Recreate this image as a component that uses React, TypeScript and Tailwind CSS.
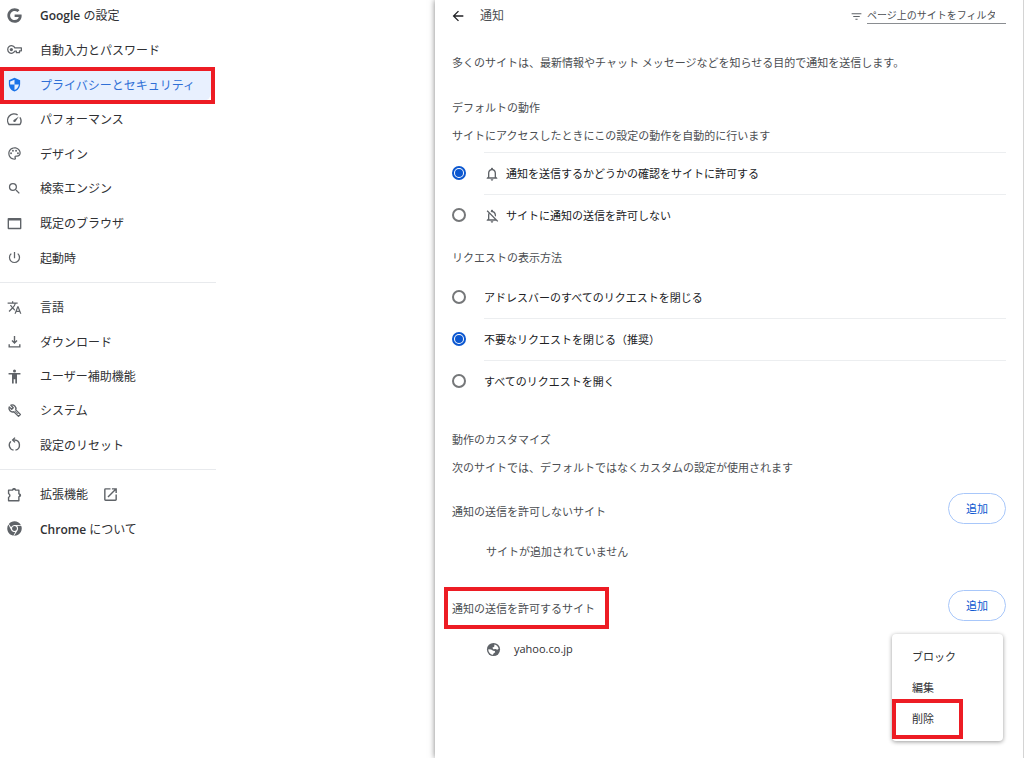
import React, { useState } from "react";
import type { IconType } from "react-icons";
import { FaChrome, FaGoogle } from "react-icons/fa";
import {
  MdArrowBack,
  MdFilterList,
  MdNotificationsNone,
  MdOpenInNew,
  MdOutlineNotificationsOff,
  MdOutlinePalette,
  MdPowerSettingsNew,
  MdSearch,
  MdTranslate,
} from "react-icons/md";

type GlyphProps = { className?: string };
type Glyph = IconType | ((props: GlyphProps) => React.ReactElement);

function KeyIcon({ className }: GlyphProps) {
  return (
    <svg viewBox="0 0 24 24" className={className} fill="none" stroke="currentColor" strokeWidth="2" aria-hidden="true">
      <path d="M12.6 9.5A6 6 0 1 0 12.6 14.5H15v2.5h5v-3h3V9.5z" strokeLinejoin="round" />
      <circle cx="7" cy="12" r="2.6" fill="currentColor" stroke="none" />
    </svg>
  );
}

function ShieldIcon({ className }: GlyphProps) {
  return (
    <svg viewBox="0 0 24 24" className={className} fill="currentColor" aria-hidden="true">
      <path
        fillRule="evenodd"
        d="M12 1 3 5v6c0 5.55 3.84 10.74 9 12 5.16-1.26 9-6.45 9-12V5zM12 4.2V12h7c-.5 4.1-3.3 7.8-7 8.9V12H5V7.3z"
      />
    </svg>
  );
}

function GaugeIcon({ className }: GlyphProps) {
  return (
    <svg viewBox="0 0 24 24" className={className} fill="none" stroke="currentColor" strokeWidth="2.2" aria-hidden="true">
      <path d="M20.6 8.6A10.5 10.5 0 0 1 20.8 20H3.2A10.5 10.5 0 0 1 17 4.6" strokeLinejoin="round" />
      <path d="M10.6 15.4a2 2 0 0 1 0-2.8L19 7l-5.6 8.4a2 2 0 0 1-2.8 0z" fill="currentColor" stroke="none" />
    </svg>
  );
}

function WindowIcon({ className }: GlyphProps) {
  return (
    <svg viewBox="0 0 24 24" className={className} fill="currentColor" aria-hidden="true">
      <path fillRule="evenodd" d="M2.5 3h19A1.5 1.5 0 0 1 23 4.500v15a1.500 1.500 0 0 1-1.500 1.500h-19A1.500 1.500 0 0 1 1 19.500v-15A1.500 1.500 0 0 1 2.500 3zM3.200 7.200v11.600h17.600V7.200z" />
    </svg>
  );
}

function DownloadIcon({ className }: GlyphProps) {
  return (
    <svg viewBox="0 0 24 24" className={className} fill="none" stroke="currentColor" strokeWidth="2.2" aria-hidden="true">
      <path d="M12 3v11M8 10.500l4 4 4-4M3.500 16.500v4h17v-4" />
    </svg>
  );
}

function PersonIcon({ className }: GlyphProps) {
  return (
    <svg viewBox="0 0 24 24" className={className} fill="currentColor" aria-hidden="true">
      <circle cx="12" cy="3.200" r="2.400" />
      <path d="M2.500 6.500h19v2.300H16V23h-2.700v-6.500h-2.600V23H8V8.800H2.500z" />
    </svg>
  );
}

function WrenchIcon({ className }: GlyphProps) {
  return (
    <svg viewBox="0 0 24 24" className={className} fill="none" stroke="currentColor" strokeWidth="2.200" strokeLinejoin="round" aria-hidden="true">
      <path d="M6.200 3.500A6 6 0 0 1 14 11l7.400 7.400-3 3L11 14A6 6 0 0 1 3.500 6.200L7.500 10 10 7.500z" />
      <path d="M12.500 12.500l5 5" strokeWidth="1.200" />
    </svg>
  );
}

function ResetIcon({ className }: GlyphProps) {
  return (
    <svg viewBox="0 0 24 24" className={className} fill="none" stroke="currentColor" strokeWidth="2.200" aria-hidden="true">
      <path d="M10.500 21a8.200 8.200 0 0 1-4.300-14M13.500 21a8.200 8.200 0 0 0-1.500-16.200H9.500" />
      <path d="M12.800 1 9 4.800l3.800 3.800" />
    </svg>
  );
}

function PuzzleIcon({ className }: GlyphProps) {
  return (
    <svg viewBox="0 0 24 24" className={className} fill="none" stroke="currentColor" strokeWidth="2.200" strokeLinejoin="round" aria-hidden="true">
      <path d="M2.500 5H9a2.300 2.300 0 0 1 4.600 0H19v6a2.300 2.300 0 0 1 0 4.600V22H2.500v-5.500a3.200 3.200 0 0 0 0-6z" />
      <path d="M9.500 4a1.800 1.800 0 0 1 3.600 0zM20 11.500a1.800 1.800 0 0 1 0 3.600z" fill="currentColor" strokeWidth="1" />
    </svg>
  );
}

function GlobeIcon({ className }: GlyphProps) {
  return (
    <svg viewBox="0 0 24 24" className={className} aria-hidden="true">
      <circle cx="12" cy="12" r="10.500" fill="currentColor" />
      <path d="M13.500 3.800c3.400.5 6.200 3.200 6.700 7l-2.200 1.700-2.500-1.200-3.700.2-1.700-2.300 3-1.500z" fill="white" />
      <path d="M3.700 11.500l4.500.5 3.300 2 2.600.3.600 2.200-2.700 1.700-.8 2.200C7 20 3.700 16.500 3.700 11.500z" fill="white" />
    </svg>
  );
}

type NavItem = { label: React.ReactNode; icon: Glyph; selected?: boolean; external?: boolean };

const primaryNav: NavItem[] = [
  { label: <><span className="font-semibold">Google</span> の設定</>, icon: FaGoogle },
  { label: "自動入力とパスワード", icon: KeyIcon },
  { label: "プライバシーとセキュリティ", icon: ShieldIcon, selected: true },
  { label: "パフォーマンス", icon: GaugeIcon },
  { label: "デザイン", icon: MdOutlinePalette },
  { label: "検索エンジン", icon: MdSearch },
  { label: "既定のブラウザ", icon: WindowIcon },
  { label: "起動時", icon: MdPowerSettingsNew },
];

const advancedNav: NavItem[] = [
  { label: "言語", icon: MdTranslate },
  { label: "ダウンロード", icon: DownloadIcon },
  { label: "ユーザー補助機能", icon: PersonIcon },
  { label: "システム", icon: WrenchIcon },
  { label: "設定のリセット", icon: ResetIcon },
];

const footerNav: NavItem[] = [
  { label: "拡張機能", icon: PuzzleIcon, external: true },
  { label: <><span className="font-semibold">Chrome</span> について</>, icon: FaChrome },
];

function NavLink({ item }: { item: NavItem }) {
  const Icon = item.icon;
  return (
    <li className="relative flex min-h-0 flex-1 items-center">
      <a
        href="#"
        aria-current={item.selected ? "page" : undefined}
        className={
          item.selected
            ? "flex h-8 w-[211px] items-center rounded-br-lg bg-[#e8f0fe] pl-[7px] text-[#2f6fd6]"
            : "flex h-8 w-[211px] items-center pl-[7px] text-[#303134]"
        }
      >
        <Icon className={item.selected ? "size-[15px] shrink-0 text-[#1a73e8]" : "size-[15px] shrink-0 text-[#5f6368]"} />
        <span className="ml-[18px] pt-[2px] whitespace-nowrap">{item.label}</span>
        {item.external && <MdOpenInNew className="ml-[14px] size-[17px] text-[#5f6368]" />}
      </a>
      {item.selected && (
        <span className="pointer-events-none absolute top-0 left-0 h-[37px] w-[215px] border-4 border-[#ed1c24]" />
      )}
    </li>
  );
}

function Sidebar() {
  return (
    <nav className="w-[435px] shrink-0 text-[12px] leading-[18px]">
      <div className="-mt-[2px] w-[216px]">
        <ul className="flex h-[277px] flex-col">
          {primaryNav.map((item, i) => <NavLink key={i} item={item} />)}
        </ul>
        <hr className="my-[7px] border-[#e8eaed]" />
        <ul className="flex h-[172px] flex-col">
          {advancedNav.map((item, i) => <NavLink key={i} item={item} />)}
        </ul>
        <hr className="my-[7px] border-[#e8eaed]" />
        <ul className="flex h-[69px] flex-col">
          {footerNav.map((item, i) => <NavLink key={i} item={item} />)}
        </ul>
      </div>
    </nav>
  );
}

type RadioRowProps = {
  name: string;
  label: string;
  checked: boolean;
  onSelect: () => void;
  icon?: IconType;
  divider?: boolean;
};

function RadioRow({ name, label, checked, onSelect, icon: Icon, divider = true }: RadioRowProps) {
  return (
    <label className="flex h-[42px] items-center text-[#202124]">
      <input
        type="radio"
        name={name}
        checked={checked}
        onChange={onSelect}
        className="size-[14px] shrink-0 appearance-none rounded-full border-2 border-[#757779] bg-clip-content p-px checked:border-[#0b57d0] checked:bg-[#0b57d0]"
      />
      <span
        className={
          divider
            ? "ml-[18px] flex h-full flex-1 items-center border-t border-[#eceef0]"
            : "ml-[18px] flex h-full flex-1 items-center border-t border-transparent"
        }
      >
        {Icon && <Icon className="mr-[6px] size-4 text-[#5f6368]" />}
        {label}
      </span>
    </label>
  );
}

function AddButton() {
  return (
    <button type="button" className="h-[31px] w-[58px] rounded-full border border-[#a8c7fa] text-[#0b57d0]">
      追加
    </button>
  );
}

function SiteMenu() {
  return (
    <div
      role="menu"
      className="absolute -top-[5px] right-[3px] flex w-[111px] flex-col rounded bg-white py-[7px] text-[#303134] shadow-[0_1px_4px_rgba(0,0,0,0.4)]"
    >
      <button type="button" role="menuitem" className="h-[31px] pl-5 text-left">ブロック</button>
      <button type="button" role="menuitem" className="h-[31px] pl-5 text-left">編集</button>
      <button type="button" role="menuitem" className="relative h-[31px] pl-5 text-left">
        削除
        <span className="pointer-events-none absolute -top-1 left-0 h-10 w-[71px] border-4 border-[#ed1c24]" />
      </button>
    </div>
  );
}

function NotificationSettings() {
  const [permission, setPermission] = useState("ask");
  const [display, setDisplay] = useState("quiet");
  return (
    <main className="min-w-0 flex-1 border-r border-[#d4d4d4] px-[17px] pt-px pb-4 text-[11px] leading-5 text-[#4b4e52] shadow-[0_0_6px_rgba(0,0,0,0.5)]">
      <header className="flex h-[30px] items-center">
        <button type="button" aria-label="戻る" className="-ml-[2px] text-[#202124]">
          <MdArrowBack className="size-4" />
        </button>
        <h1 className="ml-[14px] flex-1 text-[12px]">通知</h1>
        <label className="flex items-center gap-1">
          <MdFilterList className="size-[13px] text-[#5f6368]" />
          <input
            type="search"
            aria-label="ページ上のサイトをフィルタ"
            placeholder="ページ上のサイトをフィルタ"
            className="h-4 w-[139px] border-b border-[#8a8d91] pb-px text-[10px] placeholder:text-[#4b4e52] placeholder:opacity-100"
          />
        </label>
      </header>

      <p className="mt-[22px]">多くのサイトは、最新情報やチャット メッセージなどを知らせる目的で通知を送信します。</p>

      <h2 className="mt-[25px]">デフォルトの動作</h2>
      <p className="mt-2 mb-[6px]">サイトにアクセスしたときにこの設定の動作を自動的に行います</p>
      <RadioRow
        name="permission"
        label="通知を送信するかどうかの確認をサイトに許可する"
        icon={MdNotificationsNone}
        checked={permission === "ask"}
        onSelect={() => setPermission("ask")}
      />
      <RadioRow
        name="permission"
        label="サイトに通知の送信を許可しない"
        icon={MdOutlineNotificationsOff}
        checked={permission === "block"}
        onSelect={() => setPermission("block")}
      />

      <h2 className="mt-3 mb-2">リクエストの表示方法</h2>
      <RadioRow
        name="display"
        label="アドレスバーのすべてのリクエストを閉じる"
        divider={false}
        checked={display === "all-quiet"}
        onSelect={() => setDisplay("all-quiet")}
      />
      <RadioRow
        name="display"
        label="不要なリクエストを閉じる（推奨）"
        checked={display === "quiet"}
        onSelect={() => setDisplay("quiet")}
      />
      <RadioRow
        name="display"
        label="すべてのリクエストを開く"
        checked={display === "loud"}
        onSelect={() => setDisplay("loud")}
      />

      <h2 className="mt-7">動作のカスタマイズ</h2>
      <p className="mt-2">次のサイトでは、デフォルトではなくカスタムの設定が使用されます</p>

      <section className="mt-[15px]">
        <div className="flex justify-between">
          <h3 className="pt-[9px]">通知の送信を許可しないサイト</h3>
          <AddButton />
        </div>
        <p className="mt-[18px] ml-[34px]">サイトが追加されていません</p>
      </section>

      <section className="mt-7">
        <div className="flex justify-between">
          <h3 className="relative pt-[9px]">
            通知の送信を許可するサイト
            <span className="pointer-events-none absolute -top-[3px] -left-2 h-[42px] w-[165px] border-4 border-[#ed1c24]" />
          </h3>
          <AddButton />
        </div>
        <div className="relative mt-[18px]">
          <div className="ml-[34px] flex items-center gap-[13px]">
            <GlobeIcon className="size-[15px] text-[#5f6368]" />
            <span className="text-[#303134]">yahoo.co.jp</span>
          </div>
          <SiteMenu />
        </div>
      </section>
    </main>
  );
}

export default function App() {
  return (
    <div className="flex min-h-screen bg-white font-['Open_Sans','Noto_Sans_CJK_JP',sans-serif]">
      <Sidebar />
      <NotificationSettings />
    </div>
  );
}
